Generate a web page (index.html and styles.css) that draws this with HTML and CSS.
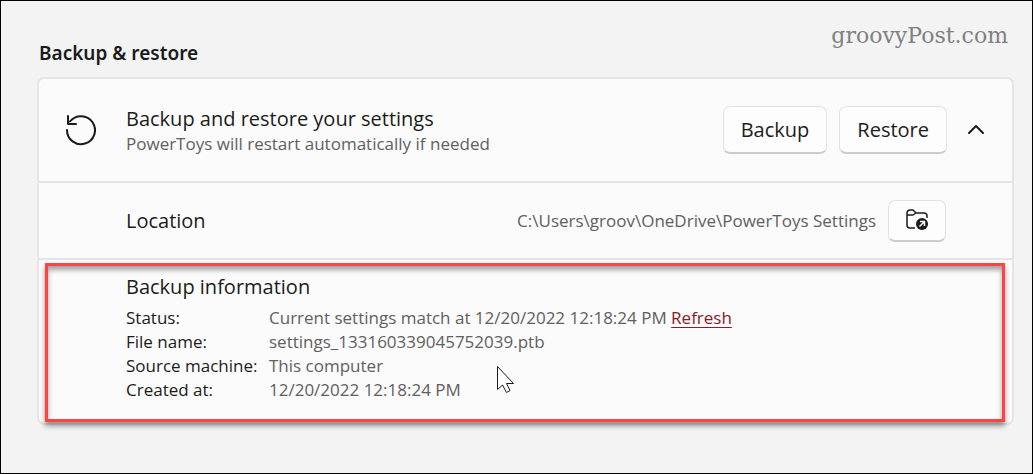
FILE: index.html
```html
<!DOCTYPE html>
<html lang="en">
<head>
  <meta charset="UTF-8" />
  <meta name="viewport" content="width=device-width, initial-scale=1.0"/>
  <title>Backup &amp; restore</title>
  <link rel="stylesheet" href="styles.css">
</head>
<body>
  <header class="top">
    <h1>Backup &amp; restore</h1>
    <span class="watermark">groovyPost.com</span>
  </header>

  <main class="card">
    <section class="row main-row">
      <svg class="restore-icon" width="32" height="32" viewBox="0 0 32 32" fill="none" stroke="#1b1b1b" stroke-width="2" stroke-linecap="round" stroke-linejoin="round">
        <path d="M3 16A14 14 0 1 0 6 7.500" />
        <path d="M4 2v8h8" />
      </svg>
      <div class="text">
        <h2>Backup and restore your settings</h2>
        <p>PowerToys will restart automatically if needed</p>
      </div>
      <div class="buttons">
        <button type="button">Backup</button>
        <button type="button">Restore</button>
      </div>
      <button type="button" class="toggle" aria-label="Collapse">
        <svg width="18" height="16" viewBox="0 0 18 16" fill="none" stroke="#1b1b1b" stroke-width="2" stroke-linecap="round" stroke-linejoin="round">
          <path d="M2 11l7-7 7 7" />
        </svg>
      </button>
    </section>

    <section class="row location-row">
      <h2>Location</h2>
      <span class="path">C:\Users\groov\OneDrive\PowerToys Settings</span>
      <button type="button" class="folder" aria-label="Select folder">
        <svg width="22" height="22" viewBox="0 0 22 22" fill="none" stroke="#1b1b1b" stroke-width="1.500" stroke-linejoin="round">
          <path d="M9 19H4a3 3 0 0 1-3-3V4a3 3 0 0 1 3-3h3l3 3h8a3 3 0 0 1 3 3v2M1 6h6l3-2" />
          <circle cx="16" cy="15" r="6" fill="#1b1b1b" stroke="none" />
          <path d="M13.500 17.500l4.500-4.500M14 12.500h4.500V17" stroke="#fff" />
        </svg>
      </button>
    </section>

    <section class="info">
      <h2>Backup information</h2>
      <dl>
        <dt>Status:</dt>
        <dd>Current settings match at 12/20/2022 12:18:24 PM <a href="#">Refresh</a></dd>
        <dt>File name:</dt>
        <dd>settings_133160339045752039.ptb</dd>
        <dt>Source machine:</dt>
        <dd>This computer</dd>
        <dt>Created at:</dt>
        <dd>12/20/2022 12:18:24 PM</dd>
      </dl>
      <div class="highlight"></div>
    </section>
  </main>

  <svg class="cursor" width="20" height="29" viewBox="0 0 20 29">
    <path d="M1.500 1.500v23l5-4.500 4 7.500 3.500-2-3.500-7h7z" fill="#fff" stroke="#1b1b1b" />
  </svg>
</body>
</html>
```
FILE: styles.css
```css
* {
  box-sizing: border-box;
}

body {
  margin: 0;
  min-height: 100vh;
  padding: 20px 18px 48px 36px;
  border: 1px solid #000;
  background-color: #f3f3f3;
  color: #1b1b1b;
  font-family: "Open Sans", "Noto Sans", sans-serif;
  font-size: 17px;
}

h1, h2, p, dl, dd {
  margin: 0;
}

h1 {
  padding: 18px 2px 0;
  font-family: "Noto Sans", sans-serif;
  font-size: 19px;
  line-height: 28px;
  font-weight: 600;
}

h2 {
  font-size: 20px;
  line-height: 26px;
  font-weight: 400;
}

.top {
  display: flex;
  justify-content: space-between;
  align-items: flex-start;
  height: 56px;
}

.watermark {
  padding-right: 6px;
  color: #808080;
  font-family: "DejaVu Serif", serif;
  font-size: 22px;
  line-height: 30px;
}

.card {
  border: 2px solid #e5e5e5;
  border-radius: 7px;
  background-color: #fbfbfb;
}

.row {
  display: flex;
  align-items: center;
  border-bottom: 2px solid #e5e5e5;
}

.main-row {
  min-height: 104px;
  padding: 0 19px 0 25px;
}

.restore-icon {
  margin-right: 30px;
}

.text {
  flex: 1;
  padding-top: 2px;
}

.text p {
  color: #606060;
  line-height: 24px;
}

.buttons {
  display: flex;
  gap: 12px;
}

button {
  height: 48px;
  padding: 0 17px;
  border: 1px solid #e2e2e2;
  border-bottom: 2px solid #cccccc;
  border-radius: 7px;
  background-color: #fdfdfd;
  color: #1b1b1b;
  font-family: inherit;
  font-size: 20px;
}

.toggle {
  width: 34px;
  margin-left: 12px;
  padding: 0;
  border: none;
  background: none;
}

.location-row {
  min-height: 77px;
  padding: 0 66px 0 87px;
}

.path {
  margin-left: auto;
  margin-right: 12px;
  color: #606060;
}

.folder {
  display: flex;
  align-items: center;
  justify-content: center;
  width: 58px;
  height: 42px;
  padding: 0;
}

.info {
  position: relative;
  padding: 14px 20px 21px 87px;
}

dl {
  display: grid;
  grid-template-columns: 143px 1fr;
  margin-top: 6px;
  line-height: 24px;
}

dd {
  color: #606060;
}

dd a {
  color: #84202b;
  text-underline-offset: 3px;
}

/* red frame over the backup info */
.highlight {
  position: absolute;
  inset: 3px 7px 1px 6px;
  border: 3px solid #ff4343;
  box-shadow: 0 4px 5px rgba(0, 0, 0, 0.4), inset 0 4px 5px rgba(0, 0, 0, 0.35);
  pointer-events: none;
}

.cursor {
  position: absolute;
  left: 496px;
  top: 365px;
}
```
